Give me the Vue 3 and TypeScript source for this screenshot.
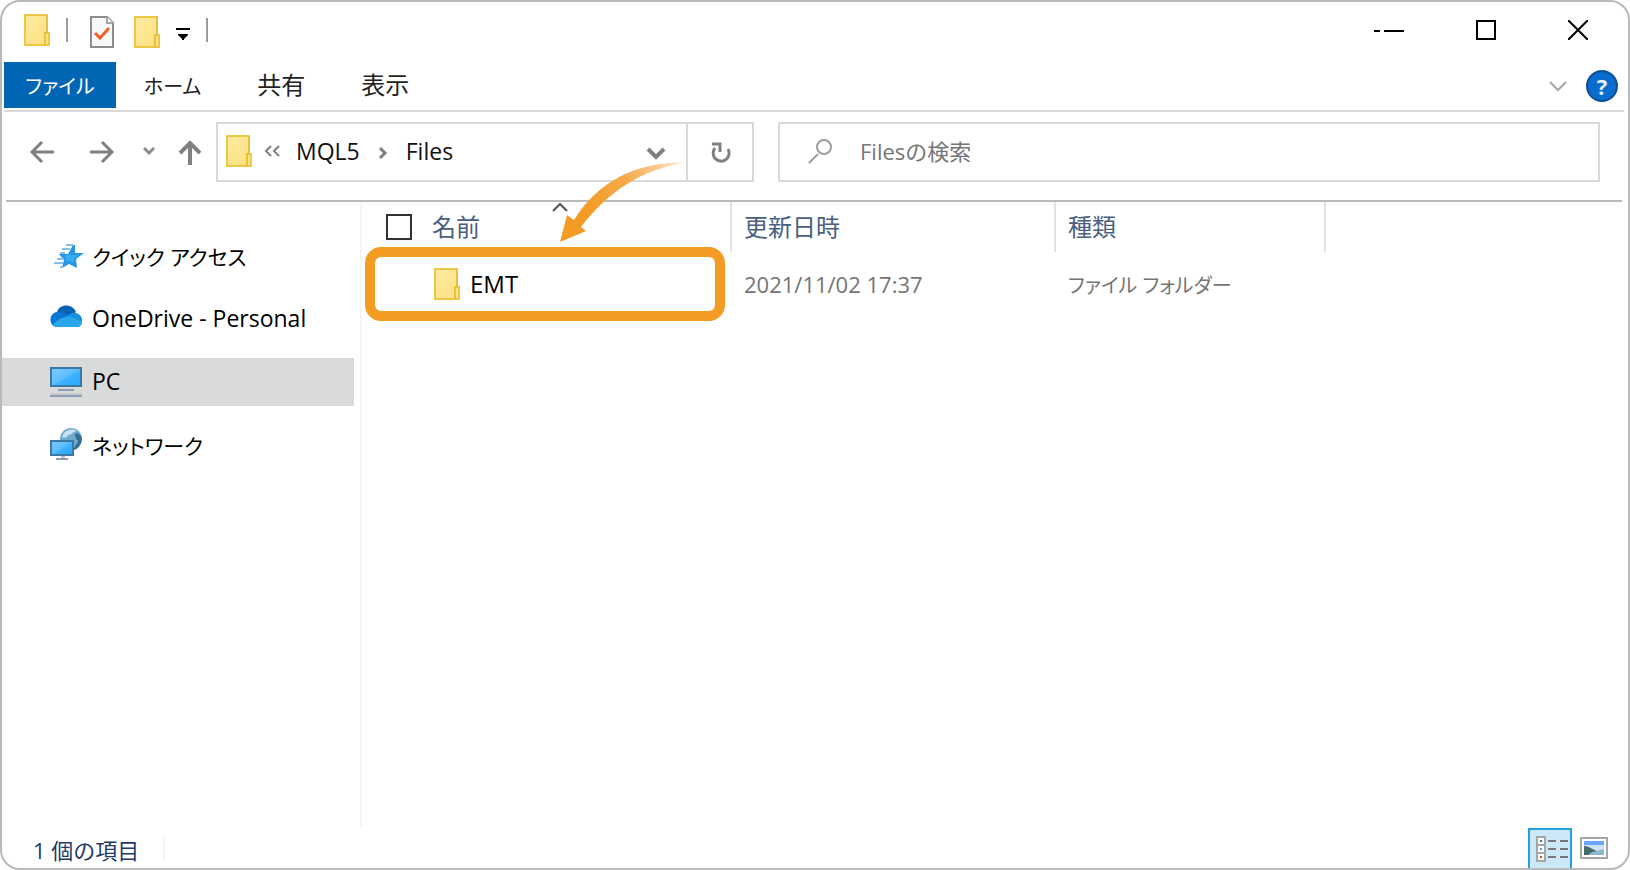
<script setup lang="ts">
import { ref } from 'vue'

interface FileEntry {
  name: string
  modified: string
  kind: string
}

interface Place {
  id: string
  label: string
  kana: boolean
}

const tabs: { label: string; kana: boolean }[] = [
  { label: 'ホーム', kana: true },
  { label: '共有', kana: false },
  { label: '表示', kana: false },
]

const places: Place[] = [
  { id: 'quick', label: 'クイック アクセス', kana: true },
  { id: 'onedrive', label: 'OneDrive - Personal', kana: false },
  { id: 'pc', label: 'PC', kana: false },
  { id: 'network', label: 'ネットワーク', kana: true },
]

const files: FileEntry[] = [
  { name: 'EMT', modified: '2021/11/02 17:37', kind: 'ファイル フォルダー' },
]

const current = ref('pc')
const query = ref('')
const allSelected = ref(false)
</script>

<template>
  <div class="window">
    <svg class="defs" width="0" height="0" aria-hidden="true">
      <defs>
        <linearGradient id="folder-fill" x1="0" y1="0" x2="1" y2="1">
          <stop offset="0" stop-color="#ffeba3" />
          <stop offset="1" stop-color="#fddf7c" />
        </linearGradient>
        <linearGradient id="screen-fill" x1="0" y1="0" x2="1" y2="1">
          <stop offset="0" stop-color="#7fcbff" />
          <stop offset="0.5" stop-color="#5bbdff" />
          <stop offset="0.55" stop-color="#3fb2ff" />
          <stop offset="1" stop-color="#22a7fb" />
        </linearGradient>
        <symbol id="folder" viewBox="0 0 26 32">
          <path d="M1 1h22v18h2v12H1z" fill="url(#folder-fill)" stroke="#ecc846" stroke-width="2" />
          <path d="M21 31V19h2M23 1v18" fill="none" stroke="#e6c042" stroke-width="2" />
        </symbol>
      </defs>
    </svg>

    <header class="titlebar">
      <svg class="folder first" aria-hidden="true"><use href="#folder" /></svg>
      <span class="divider"></span>
      <div class="tools">
        <button class="plain" aria-label="プロパティ">
          <svg width="24" height="32" viewBox="0 0 24 32">
            <path d="M1 1h16l6 6v24H1z" fill="#f7f8fa" stroke="#8c8c8c" stroke-width="2" />
            <path d="M17 1v6h6" fill="#fff" stroke="#a5a5a5" stroke-width="2" />
            <path d="M5 17l5 5L19 12" fill="none" stroke="#f4622c" stroke-width="3" />
          </svg>
        </button>
        <button class="plain new-folder" aria-label="新しいフォルダー">
          <svg class="folder" aria-hidden="true"><use href="#folder" /></svg>
        </button>
        <button class="plain" aria-label="クイック アクセス ツール バーのカスタマイズ">
          <svg width="14" height="16" viewBox="0 0 14 16"><path d="M0 4h14v2H0zM2 10h10v1l-4 4v1H6v-1l-4-4z" /></svg>
        </button>
      </div>
      <span class="divider"></span>
      <div class="controls">
        <button class="plain" aria-label="最小化">
          <svg width="30" height="20" viewBox="0 0 30 20"><path d="M0 10h6v2H0zM10 10h20v2H10z" /></svg>
        </button>
        <button class="plain" aria-label="最大化">
          <svg width="20" height="20" viewBox="0 0 20 20"><path d="M1 1h18v18H1z" fill="none" stroke="#000" stroke-width="2" /></svg>
        </button>
        <button class="plain" aria-label="閉じる">
          <svg width="20" height="20" viewBox="0 0 20 20"><path d="M0 0l20 20M20 0L0 20" fill="none" stroke="#000" stroke-width="2" /></svg>
        </button>
      </div>
    </header>

    <nav class="ribbon" aria-label="リボン">
      <button class="tab file kana">ファイル</button>
      <button v-for="tab in tabs" :key="tab.label" class="tab" :class="{ kana: tab.kana }">{{ tab.label }}</button>
      <div class="ribbon-tools">
        <button class="plain" aria-label="リボンの展開">
          <svg width="18" height="11" viewBox="0 0 18 11"><path d="M1 1l8 8 8-8" fill="none" stroke="#a6a6a6" stroke-width="2" /></svg>
        </button>
        <button class="help" aria-label="ヘルプ">?</button>
      </div>
    </nav>

    <div class="navigation">
      <button class="plain" aria-label="戻る">
        <svg width="24" height="22" viewBox="0 0 24 22"><path d="M12 1L2 11l10 10M2 11h22" fill="none" stroke="#808080" stroke-width="3" /></svg>
      </button>
      <button class="plain forward" aria-label="進む">
        <svg width="24" height="22" viewBox="0 0 24 22"><path d="M12 1l10 10-10 10M22 11H0" fill="none" stroke="#808080" stroke-width="3" /></svg>
      </button>
      <button class="plain recent" aria-label="最近表示した場所">
        <svg width="12" height="10" viewBox="0 0 12 10"><path d="M1 1l5 5 5-5" fill="none" stroke="#8a8a8a" stroke-width="3" /></svg>
      </button>
      <button class="plain up" aria-label="上へ">
        <svg width="22" height="26" viewBox="0 0 22 26"><path d="M1 14L11 4l10 10M11 4v22" fill="none" stroke="#808080" stroke-width="4" /></svg>
      </button>
      <div class="address">
        <div class="path">
          <svg class="folder" aria-hidden="true"><use href="#folder" /></svg>
          <svg class="overflow" width="16" height="12" viewBox="0 0 16 12" aria-hidden="true">
            <path d="M7 1L2 6l5 5M15 1l-5 5 5 5" fill="none" stroke="#808080" stroke-width="2" />
          </svg>
          <a href="#mql5">MQL5</a>
          <svg class="separator" width="10" height="18" viewBox="0 0 10 18" aria-hidden="true">
            <path d="M2 6l5 5-5 5" fill="none" stroke="#808080" stroke-width="3" />
          </svg>
          <a href="#files">Files</a>
        </div>
        <button class="plain history" aria-label="以前の場所">
          <svg width="20" height="16" viewBox="0 0 20 16"><path d="M2 5l8 8 8-8" fill="none" stroke="#808080" stroke-width="4" /></svg>
        </button>
        <button class="plain refresh" aria-label="最新の情報に更新">
          <svg width="22" height="26" viewBox="0 0 22 26">
            <path d="M5 9a8 8 0 1 0 13 1" fill="none" stroke="#808080" stroke-width="3" />
            <path d="M2 5h8v8" fill="none" stroke="#808080" stroke-width="3" />
          </svg>
        </button>
      </div>
      <label class="search">
        <svg width="26" height="26" viewBox="0 0 26 26" aria-hidden="true">
          <path d="M10 16L1 25" stroke="#9b9ba2" stroke-width="2" />
          <circle cx="16" cy="9" r="7" fill="none" stroke="#9b9ba2" stroke-width="2" />
        </svg>
        <input v-model="query" type="search" placeholder="Filesの検索" aria-label="Filesの検索" />
      </label>
    </div>

    <div class="content">
      <nav class="sidebar" aria-label="ナビゲーション ウィンドウ">
        <a
          v-for="place in places"
          :key="place.id"
          :href="'#' + place.id"
          class="place"
          :class="{ current: place.id === current }"
          @click.prevent="current = place.id"
        >
          <svg v-if="place.id === 'quick'" class="star" width="32" height="32" viewBox="0 0 32 32" aria-hidden="true">
            <path d="M25 6v8h9l-8 6 1 9-8-4-7 4 2-8-5-6h9l5-9z" fill="#2497e2" />
            <path d="M15 16h14l-5 4v3l-8-1z" fill="#35adf5" />
            <path d="M16 6h7M12 10h8M10 14h5" stroke="#84bfe8" stroke-width="2" />
            <path d="M7 20h7M4 24h9M10 28h3" stroke="#84bfe8" stroke-width="2" />
          </svg>
          <svg v-else-if="place.id === 'onedrive'" width="32" height="32" viewBox="0 2 32 32" aria-hidden="true">
            <path d="M7 12C9 4 22 3 26 12l-8 6z" fill="#0864b5" />
            <path d="M6 27C-2 25-1 13 7 12c4-1 7 1 11 4l-4 11z" fill="#0878d4" />
            <path d="M17 16c5-6 14-3 15 3 0 4-1 8-5 8z" fill="#1490df" />
            <path d="M3 25C8 18 18 14 24 18c3 2 6 2 8 4 0 3-2 5-5 5H7c-2 0-3-1-4-2z" fill="#28a8ea" />
          </svg>
          <svg v-else-if="place.id === 'pc'" width="32" height="32" viewBox="0 0 32 32" aria-hidden="true">
            <path d="M1 3h30v18H1z" fill="url(#screen-fill)" stroke="#3d77a3" stroke-width="2" />
            <path d="M8 25h16M0 31h32" stroke="#8f9bb3" stroke-width="2" />
            <path d="M0 29h32" stroke="#c5cbd0" stroke-width="2" />
          </svg>
          <svg v-else width="32" height="32" viewBox="0 0 32 32" aria-hidden="true">
            <circle cx="21" cy="11" r="11" fill="#6fa9cc" />
            <path d="M12 9c2-8 12-9 15-6-4 0-5 4-9 4-1 3-3 3-6 2z" fill="#c9e2ef" />
            <path d="M25 6c3-2 6 1 7 5-1 6-4 10-8 11 0-4 3-5 4-9-2-2-3-4-3-7z" fill="#386e94" />
            <path d="M1 13h22v14H1z" fill="url(#screen-fill)" stroke="#3d77a3" stroke-width="2" />
            <path d="M6 31h12" stroke="#8f9bb3" stroke-width="2" />
            <path d="M11 29h4" stroke="#b7c5d6" stroke-width="2" />
          </svg>
          <span :class="{ kana: place.kana }">{{ place.label }}</span>
        </a>
      </nav>

      <main class="listing">
        <table>
          <colgroup>
            <col class="col-name" />
            <col class="col-date" />
            <col class="col-kind" />
            <col />
          </colgroup>
          <thead>
            <tr>
              <th scope="col" aria-sort="ascending">
                <div class="heading">
                  <input v-model="allSelected" type="checkbox" aria-label="すべて選択" />
                  <span>名前</span>
                </div>
                <svg class="sort" width="16" height="10" viewBox="0 0 16 10" aria-hidden="true">
                  <path d="M1 9l7-7 7 7" fill="none" stroke="#555" stroke-width="2" />
                </svg>
              </th>
              <th scope="col">更新日時</th>
              <th scope="col">種類</th>
              <td></td>
            </tr>
          </thead>
          <tbody>
            <tr v-for="file in files" :key="file.name">
              <td class="name-cell">
                <div class="name">
                  <svg class="folder" aria-hidden="true"><use href="#folder" /></svg>
                  <span>{{ file.name }}</span>
                </div>
                <div class="highlight"></div>
              </td>
              <td>{{ file.modified }}</td>
              <td class="kana">{{ file.kind }}</td>
              <td></td>
            </tr>
          </tbody>
        </table>
        <svg class="arrow" width="128" height="82" viewBox="0 0 128 82" aria-hidden="true">
          <defs>
            <linearGradient id="arrow-fill" gradientUnits="userSpaceOnUse" x1="30" y1="60" x2="127" y2="0">
              <stop offset="0" stop-color="#f49b23" />
              <stop offset="0.45" stop-color="#f5a947" />
              <stop offset="0.8" stop-color="#fbd09c" />
              <stop offset="1" stop-color="#fff3e4" />
            </linearGradient>
          </defs>
          <path d="M0 80L7 53l7 5C38 20 74 0 127 0 80 8 48 30 21 65l5 4z" fill="url(#arrow-fill)" />
        </svg>
      </main>
    </div>

    <footer class="status">
      <span class="count">1 個の項目</span>
      <div class="views">
        <button class="view active" aria-label="詳細" aria-pressed="true">
          <svg width="32" height="26" viewBox="0 0 32 26">
            <path d="M1 1h8v24H1zM1 9h8M1 17h8" fill="#fff" stroke="#a6a6a6" stroke-width="2" />
            <path d="M12 5h8M24 5h8M12 13h8M24 13h8M12 21h8M24 21h8" stroke="#777" stroke-width="2" />
            <path d="M4 4h2v2H4z" fill="#4b7c68" />
            <path d="M4 12h2v2H4z" fill="#5b95f5" />
            <path d="M4 20h2v2H4z" fill="#e0571c" />
          </svg>
        </button>
        <button class="view" aria-label="大アイコン" aria-pressed="false">
          <svg width="28" height="22" viewBox="0 0 28 22">
            <path d="M1 1h26v20H1z" fill="#fff" stroke="#a6a6a6" stroke-width="2" />
            <path d="M4 4h20v5H4z" fill="#6aa6fb" />
            <path d="M4 8h20v5H4z" fill="#cfe1f6" />
            <path d="M4 9c6 0 8 4 14 5l-4 4H4z" fill="#456b69" />
            <path d="M12 15l12-3v6H8z" fill="#8bb8d0" />
          </svg>
        </button>
      </div>
    </footer>
  </div>
</template>

<style>
body {
  margin: 0;
  background: #fff;
}
</style>

<style scoped>
.window {
  box-sizing: border-box;
  display: flex;
  flex-direction: column;
  min-height: 100vh;
  border: 2px solid #b9b9b9;
  border-radius: 20px;
  background: #fff;
  color: #111;
  font-family: "Open Sans", "Noto Sans CJK JP", sans-serif;
  font-size: 22px;
  line-height: 32px;
}
.defs {
  position: absolute;
}
svg {
  display: block;
  flex: none;
}
button {
  font: inherit;
  cursor: pointer;
}
a {
  color: inherit;
  text-decoration: none;
}
.plain {
  padding: 0;
  border: 0;
  background: none;
}
.folder {
  width: 26px;
  height: 32px;
}
.titlebar {
  display: flex;
  align-items: center;
  box-sizing: border-box;
  height: 60px;
  padding: 0 40px 4px 22px;
}
.first {
  margin-right: 16px;
}
.divider {
  width: 2px;
  height: 24px;
  background: #9c9c9c;
}
.tools {
  display: flex;
  align-items: center;
  padding: 4px 16px 0 22px;
}
.new-folder {
  margin: 0 16px 0 20px;
}
.controls {
  display: flex;
  gap: 72px;
  margin-left: auto;
}
.ribbon {
  display: flex;
  align-items: center;
  margin: 0 4px 0 2px;
  padding: 0 6px 2px 0;
  border-bottom: 2px solid #d9d9d9;
}
.tab {
  height: 46px;
  padding: 0 28px;
  border: 0;
  background: none;
  color: #222;
  font-size: 24px;
}
.tab.file {
  width: 112px;
  background: #0066b4;
  color: #fff;
}
.kana,
.tab.kana {
  padding-top: 4px;
  font-size: 20px;
  font-feature-settings: "palt";
}
.tab.file {
  padding-left: 0;
  padding-right: 0;
}
.ribbon-tools {
  display: flex;
  align-items: center;
  gap: 19px;
  margin-left: auto;
  padding-top: 2px;
}
.help {
  width: 32px;
  height: 32px;
  padding: 0;
  border: 2px solid #0d4f93;
  border-radius: 50%;
  background: #0a6ccf;
  color: #e4f2ff;
  font-weight: 700;
  line-height: 28px;
}
.navigation {
  display: flex;
  align-items: center;
  margin: 0 6px 0 4px;
  padding: 10px 22px 18px 24px;
  border-bottom: 2px solid #b9b9b9;
}
.forward {
  margin-left: 36px;
}
.recent {
  margin-left: 29px;
}
.up {
  margin-left: 24px;
}
.address {
  display: flex;
  align-items: center;
  box-sizing: border-box;
  flex: 0 1 538px;
  height: 60px;
  margin-left: 15px;
  padding-left: 8px;
  border: 2px solid #d9d9d9;
}
.path {
  display: flex;
  align-items: center;
  padding-bottom: 3px;
  font-size: 23px;
}
.overflow {
  margin: 0 16px 0 12px;
}
.separator {
  margin: 0 18px;
}
.history {
  margin: 0 20px 0 auto;
}
.refresh {
  display: flex;
  align-items: center;
  justify-content: center;
  align-self: stretch;
  box-sizing: border-box;
  width: 66px;
  padding-left: 2px;
  border-left: 2px solid #d9d9d9;
}
.search {
  display: flex;
  align-items: center;
  gap: 26px;
  box-sizing: border-box;
  flex: 1;
  height: 60px;
  margin-left: 24px;
  padding: 0 28px 2px;
  border: 2px solid #d9d9d9;
}
.search input {
  flex: 1;
  min-width: 0;
  padding: 0;
  border: 0;
  outline: 0;
  background: none;
  font: inherit;
}
.search input::placeholder {
  color: #757575;
  opacity: 1;
}
.content {
  display: flex;
  flex: 1;
}
.sidebar {
  display: flex;
  flex-direction: column;
  gap: 15px;
  box-sizing: border-box;
  width: 360px;
  padding: 30px 6px 0 0;
  border-right: 2px solid #f5f5f5;
}
.place {
  display: flex;
  align-items: center;
  gap: 10px;
  box-sizing: border-box;
  height: 48px;
  padding: 0 0 2px 48px;
  color: #000;
  font-size: 23px;
}
.place .kana {
  font-size: 21px;
}
.star {
  overflow: visible;
}
.current {
  background: #d9dbda;
}
.listing {
  position: relative;
  flex: 1;
  min-width: 0;
}
table {
  width: 100%;
  border-spacing: 0;
  table-layout: fixed;
}
.col-name {
  width: 370px;
}
.col-date {
  width: 324px;
}
.col-kind {
  width: 270px;
}
th {
  position: relative;
  height: 50px;
  padding: 0 0 0 12px;
  border-right: 2px solid #e3e3e3;
  color: #4a5f80;
  font-size: 24px;
  font-weight: 400;
  text-align: left;
}
tbody td {
  height: 64px;
  padding: 0 0 0 12px;
  color: #757575;
}
tbody .kana {
  box-sizing: border-box;
  padding-top: 4px;
}
.heading {
  display: flex;
  align-items: center;
  gap: 20px;
  padding-left: 12px;
}
.heading input {
  appearance: none;
  box-sizing: border-box;
  width: 26px;
  height: 26px;
  margin: 0;
  border: 2px solid #333;
  background: #fff;
}
.heading input:checked {
  background: #0066b4;
}
.sort {
  position: absolute;
  top: 0;
  right: 162px;
}
.name-cell {
  position: relative;
}
.name {
  display: flex;
  align-items: center;
  gap: 10px;
  padding-left: 60px;
  color: #000;
  font-size: 24px;
}
.highlight {
  position: absolute;
  inset: -5px 7px -5px 3px;
  border: 10px solid #f49b23;
  border-radius: 16px;
}
.arrow {
  position: absolute;
  top: -40px;
  left: 198px;
  pointer-events: none;
}
.status {
  display: flex;
  align-items: flex-end;
  justify-content: space-between;
  height: 40px;
  padding: 0 12px 0 31px;
}
.count {
  display: flex;
  align-items: center;
  height: 24px;
  margin-bottom: 6px;
  padding-right: 24px;
  border-right: 2px solid #f5f5f5;
  color: #1f3a68;
}
.views {
  display: flex;
}
.view {
  display: flex;
  align-items: center;
  justify-content: center;
  box-sizing: border-box;
  width: 44px;
  height: 40px;
  padding: 0;
  border: 0;
  background: none;
}
.view.active {
  padding-left: 4px;
  border: 2px solid #26a0da;
  border-bottom: 0;
  background: #cce8f6;
}
</style>
